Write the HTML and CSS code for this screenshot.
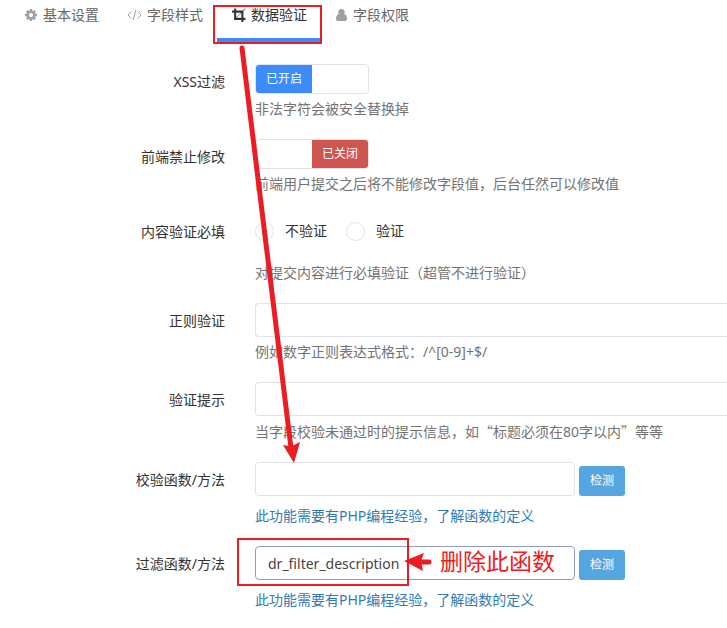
FILE: index.html
```html
<!DOCTYPE html>
<html lang="zh-CN">
<head>
<meta charset="utf-8">
<meta name="viewport" content="width=device-width, initial-scale=1">
<title>数据验证</title>
<link rel="stylesheet" href="styles.css">
</head>
<body>
<nav class="tabs">
  <a class="tab" href="#basic">
    <svg class="icon icon-cog" viewBox="128 128 1536 1536" aria-hidden="true"><path d="M1152 896q0-106-75-181t-181-75-181 75-75 181 75 181 181 75 181-75 75-181zm512-109v222q0 12-8 23t-20 13l-185 28q-19 54-39 91 35 50 107 138 10 12 10 25t-9 23q-27 37-99 108t-94 71q-12 0-26-9l-138-108q-44 23-91 38-16 136-29 186-7 28-36 28h-222q-14 0-24.5-8.5t-11.5-21.5l-28-184q-49-16-90-37l-141 107q-10 9-25 9-14 0-25-11-126-114-165-168-7-10-7-23 0-12 8-23 15-21 51-66.5t54-70.5q-27-50-41-99l-183-27q-13-2-21-12.5t-8-23.5v-222q0-12 8-23t19-13l186-28q14-46 39-92-40-57-107-138-10-12-10-24 0-10 9-23 26-36 98.5-107.5t94.5-71.5q13 0 26 10l138 107q44-23 91-38 16-136 29-186 7-28 36-28h222q14 0 24.5 8.5t11.5 21.5l28 184q49 16 90 37l142-107q9-9 24-9 13 0 25 10 129 119 165 170 7 8 7 22 0 12-8 23-15 21-51 66.5t-54 70.5q26 50 41 98l183 28q13 2 21 12.5t8 23.5z"/></svg>
    基本设置</a>
  <a class="tab" href="#style">
    <svg class="icon icon-code" viewBox="0 0 15 12" aria-hidden="true"><path d="M4.500 2.500 1 6l3.500 3.500M10.500 2.500 14 6l-3.500 3.500M8.800 1 6.200 11"/></svg>
    字段样式</a>
  <a class="tab tab-active" href="#validate" aria-current="page">
    <svg class="icon icon-crop" viewBox="64 64 1728 1728" aria-hidden="true"><path d="M672 1280h608v-608zm-32-45l595-595h-595v595zm1152 77v192q0 14-9 23t-23 9h-224v224q0 14-9 23t-23 9h-192q-14 0-23-9t-9-23v-224h-864q-14 0-23-9t-9-23v-864h-224q-14 0-23-9t-9-23v-192q0-14 9-23t23-9h224v-224q0-14 9-23t23-9h192q14 0 23 9t9 23v224h851l246-247q10-9 23-9t23 9q9 10 9 23t-9 23l-247 246v851h224q14 0 23 9t9 23z"/></svg>
    数据验证</a>
  <a class="tab" href="#access">
    <svg class="icon icon-user" viewBox="0 0 12 14" aria-hidden="true"><circle cx="6" cy="4.200" r="3.200"/><path d="M2.900 6.300C1.500 6.600.5 8.300.5 10.700c0 1.500.9 2.300 2.200 2.300h6.600c1.300 0 2.200-.8 2.200-2.300 0-2.400-1-4.100-2.400-4.400z"/></svg>
    字段权限</a>
</nav>

<form class="form">
  <div class="row">
    <label class="name" for="xss">XSS过滤</label>
    <div class="field">
      <span class="switch"><input id="xss" type="checkbox" checked><span class="on">已开启</span></span>
      <p class="help">非法字符会被安全替换掉</p>
    </div>
  </div>
  <div class="row">
    <label class="name" for="lock">前端禁止修改</label>
    <div class="field">
      <span class="switch"><input id="lock" type="checkbox"><span class="off">已关闭</span></span>
      <p class="help">前端用户提交之后将不能修改字段值，后台任然可以修改值</p>
    </div>
  </div>
  <div class="row" role="radiogroup" aria-labelledby="required-name">
    <span class="name" id="required-name">内容验证必填</span>
    <div class="field">
      <div class="radios">
        <label class="radio"><input type="radio" name="required" checked>不验证</label>
        <label class="radio"><input type="radio" name="required">验证</label>
      </div>
      <p class="help help-radios">对提交内容进行必填验证（超管不进行验证）</p>
    </div>
  </div>
  <div class="row">
    <label class="name" for="pattern">正则验证</label>
    <div class="field">
      <input class="text text-wide" id="pattern" type="text">
      <p class="help">例如数字正则表达式格式：/^[0-9]+$/</p>
    </div>
  </div>
  <div class="row">
    <label class="name" for="tips">验证提示</label>
    <div class="field">
      <input class="text text-wide" id="tips" type="text">
      <p class="help">当字段校验未通过时的提示信息，如<span class="quote">“</span>标题必须在80字以内<span class="quote">”</span>等等</p>
    </div>
  </div>
  <div class="row">
    <label class="name" for="check">校验函数/方法</label>
    <div class="field">
      <div class="group"><input class="text" id="check" type="text"><button class="button" type="button">检测</button></div>
      <p class="help help-link"><a href="#functions">此功能需要有PHP编程经验，了解函数的定义</a></p>
    </div>
  </div>
  <div class="row">
    <label class="name" for="filter">过滤函数/方法</label>
    <div class="field">
      <div class="group"><input class="text text-focus" id="filter" type="text" value="dr_filter_description"><button class="button" type="button">检测</button></div>
      <p class="help help-link"><a href="#functions">此功能需要有PHP编程经验，了解函数的定义</a></p>
    </div>
  </div>
</form>

<svg class="marks" width="640" height="600" aria-hidden="true">
  <rect x="214" y="6" width="107" height="37"/>
  <rect x="238" y="539" width="170" height="46"/>
  <path class="line" d="M242 48 291 448"/>
  <path class="head" d="M283 445 289 446 294 445 300 442 294 463z"/>
  <path class="line" d="M416 562H429"/>
  <path class="head" d="M404 561 424 553 421 561 423 571z"/>
</svg>
<span class="note">删除此函数</span>
</body>
</html>
```

FILE: styles.css
```css
* {
  box-sizing: border-box;
}

body {
  margin: 0;
  position: relative;
  overflow-x: hidden;
  background: #fff;
  color: #333;
  font: 14px/20px "Noto Sans", "Noto Sans CJK SC", sans-serif;
}

input,
button {
  margin: 0;
  font: inherit;
}

.tabs {
  display: flex;
  padding-left: 10px;
}

.tab {
  display: flex;
  align-items: center;
  gap: 5px;
  height: 42px;
  padding: 0 14px 8px;
  border-bottom: 4px solid transparent;
  color: #666;
  text-decoration: none;
  white-space: nowrap;
}

.tab-active {
  border-color: #3b8cf8;
  color: #333;
}

.icon {
  fill: #a0a0a0;
}

.icon-cog {
  width: 14px;
  height: 12px;
}

.icon-code {
  width: 15px;
  height: 12px;
  fill: none;
  stroke: #a0a0a0;
  stroke-width: 1;
}

.icon-crop {
  width: 15px;
  height: 14px;
  fill: #333;
}

.icon-user {
  width: 13px;
  height: 14px;
}

.form {
  display: grid;
  gap: 20px;
  padding-top: 22px;
}

.row {
  display: grid;
  grid-template-columns: 225px minmax(0, 1fr);
  column-gap: 30px;
  align-items: start;
}

.name {
  padding-top: 8px;
  text-align: right;
}

.switch {
  position: relative;
  display: flex;
  width: 114px;
  height: 30px;
  border: 1px solid #e0e2ee;
  border-radius: 4px;
  overflow: hidden;
  color: #fff;
  font-size: 12px;
  line-height: 28px;
  text-align: center;
}

.switch input {
  position: absolute;
  inset: 0;
  width: 100%;
  height: 100%;
  opacity: 0;
}

.on,
.off {
  width: 50%;
  background: #3b8cf8;
}

.off {
  margin-left: auto;
  background: #cf5550;
}

.help {
  margin: 5px 0 0;
  color: #737373;
}

.help-radios {
  margin-top: 15px;
}

.help-link {
  margin-top: 10px;
}

.help a {
  color: #337ab7;
  text-decoration: none;
}

.quote {
  font-family: "Noto Sans CJK SC", sans-serif;
}

.radios {
  display: flex;
  gap: 19px;
  height: 34px;
}

.radio {
  display: flex;
  align-items: center;
  gap: 11px;
}

.radio input {
  appearance: none;
  width: 19px;
  height: 19px;
  border: 1px solid #e0e2ee;
  border-radius: 50%;
}

.radio input:checked {
  background: radial-gradient(circle, #888 2px, transparent 3px);
}

.text {
  display: block;
  width: 320px;
  height: 34px;
  padding: 6px 12px;
  border: 1px solid #e0e2ee;
  border-radius: 4px;
  outline: 0;
  background: #fff;
  color: #444;
}

.text-wide {
  width: 100%;
  border-right: 0;
  border-radius: 4px 0 0 4px;
}

.text-focus {
  border-color: #929dbb;
}

.group {
  display: flex;
  align-items: flex-end;
  gap: 4px;
}

.button {
  height: 30px;
  padding: 0 11px;
  border: 0;
  border-radius: 3px;
  background: #55a6e0;
  color: #fff;
  font-size: 12px;
}

.marks {
  position: absolute;
  top: 0;
  left: 0;
  pointer-events: none;
}

.marks rect {
  fill: none;
  stroke: #ed1c24;
  stroke-width: 2;
}

.marks .line {
  stroke: #ed1c24;
  stroke-width: 5;
  stroke-linecap: round;
}

.marks .head {
  fill: #ed1c24;
}

.note {
  position: absolute;
  top: 546px;
  left: 440px;
  color: #ed1c24;
  font-size: 23px;
  line-height: 30px;
}
```
